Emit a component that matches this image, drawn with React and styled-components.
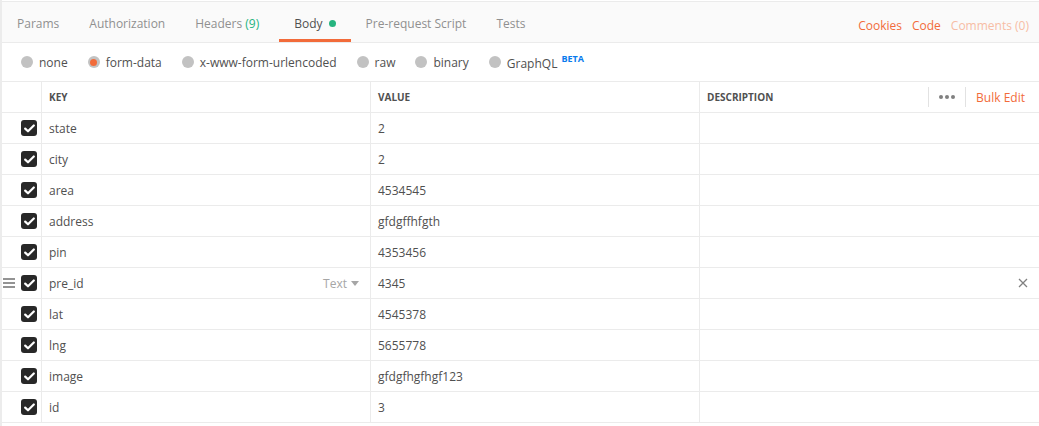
import React from "react";
import styled, { createGlobalStyle } from "styled-components";

const GlobalStyle = createGlobalStyle`
    html, body {
        margin: 0;
        padding: 0;
        background: #ffffff;
    }
    body {
        font-family: "Open Sans", "Liberation Sans", sans-serif;
        font-size: 12px;
        color: #505050;
    }
`;

const ORANGE = "#f26b3a";
const GREEN = "#26b47f";
const BORDER = "#ebebeb";

const Page = styled.div`
    width: 1039px;
    height: 426px;
    overflow: hidden;
    box-sizing: border-box;
    border-left: 2px solid #ececec;
    padding-top: 1px;
`;

const TabBar = styled.div`
    display: flex;
    align-items: stretch;
    height: 40px;
    background: #fafafa;
    border-top: 1px solid ${BORDER};
    border-bottom: 1px solid ${BORDER};
`;

const Tabs = styled.div`
    display: flex;
    flex: 1;
`;

const Tab = styled.div`
    display: flex;
    align-items: center;
    gap: 6px;
    padding: 6px ${(p) => (p.$wide ? "20px" : "15px")} 0 15px;
    box-sizing: border-box;
    font-size: 12px;
    color: ${(p) => (p.$active ? "#505050" : "#909090")};
    border-bottom: 3px solid ${(p) => (p.$active ? ORANGE : "transparent")};
`;

const Count = styled.span`
    color: ${GREEN};
`;

const Dot = styled.span`
    width: 7px;
    height: 7px;
    border-radius: 50%;
    background: ${GREEN};
`;

const Links = styled.div`
    display: flex;
    align-items: center;
    gap: 10px;
    padding: 6px 10px 0 0;
    font-size: 12px;
`;

const Link = styled.span`
    color: ${(p) => (p.$muted ? "#f7bda5" : ORANGE)};
`;

const RadioRow = styled.div`
    display: flex;
    align-items: center;
    height: 38px;
    padding-left: 19px;
    gap: 20px;
    border-bottom: 1px solid ${BORDER};
`;

const Radio = styled.label`
    display: flex;
    align-items: center;
    gap: 6px;
    font-size: 12px;
    color: #505050;
`;

const Circle = styled.span`
    width: 12px;
    height: 12px;
    border-radius: 50%;
    background: #c2c2c2;
    display: flex;
    align-items: center;
    justify-content: center;
    &::after {
        content: "";
        display: ${(p) => (p.$checked ? "block" : "none")};
        width: 7px;
        height: 7px;
        border-radius: 50%;
        background: ${ORANGE};
    }
`;

const Beta = styled.sup`
    font-size: 9px;
    font-weight: 700;
    color: #097bed;
    margin-left: 4px;
    position: relative;
    top: -1px;
`;

const Table = styled.div`
    display: grid;
    grid-template-columns: 40px 329px 329px 1fr;
`;

const Cell = styled.div`
    display: flex;
    align-items: center;
    box-sizing: border-box;
    padding: 0 7px;
    border-bottom: 1px solid ${BORDER};
    border-right: ${(p) => (p.$last ? "none" : `1px solid ${BORDER}`)};
    height: 31px;
    font-size: 12px;
    color: #505050;
`;

const HeadCell = styled(Cell)`
    font-size: 10px;
    font-weight: 700;
    color: #505050;
    text-transform: uppercase;
`;

const CheckCell = styled(Cell)`
    padding: 0 4px 0 0;
    justify-content: space-between;
`;

const Handle = styled.span`
    width: 14px;
    display: flex;
    justify-content: center;
`;

const Box = styled.span`
    width: 16px;
    height: 16px;
    border-radius: 3px;
    background: #282828;
    display: flex;
    align-items: center;
    justify-content: center;
`;

const KeyCell = styled(Cell)`
    justify-content: space-between;
`;

const TypeSelect = styled.span`
    display: flex;
    align-items: center;
    gap: 4px;
    color: #a6a6a6;
    padding-right: 4px;
`;

const DescCell = styled(Cell)`
    justify-content: space-between;
    padding-right: 10px;
`;

const HeadTools = styled.div`
    display: flex;
    align-items: center;
    height: 20px;
`;

const More = styled.span`
    height: 20px;
    display: flex;
    align-items: center;
    gap: 2px;
    padding: 0 10px;
    border-left: 1px solid #e2e2e2;
    border-right: 1px solid #e2e2e2;
`;

const MoreDot = styled.span`
    width: 4px;
    height: 4px;
    border-radius: 50%;
    background: #808080;
`;

const BulkEdit = styled.span`
    font-size: 12px;
    font-weight: 400;
    text-transform: none;
    color: ${ORANGE};
    padding: 0 4px 0 10px;
`;

const CloseIcon = styled.svg`
    width: 10px;
    height: 10px;
    margin-right: 1px;
`;

const rows = [
    ["state", "2"],
    ["city", "2"],
    ["area", "4534545"],
    ["address", "gfdgffhfgth"],
    ["pin", "4353456"],
    ["pre_id", "4345", true],
    ["lat", "4545378"],
    ["lng", "5655778"],
    ["image", "gfdgfhgfhgf123"],
    ["id", "3"],
];

function Check() {
    return (
        <Box>
            <svg width="11" height="9" viewBox="0 0 11 9">
                <path
                    d="M1.2 4.6 L4 7.3 L9.8 1.5"
                    fill="none"
                    stroke="#fff"
                    strokeWidth="2.2"
                    strokeLinecap="round"
                    strokeLinejoin="round"
                />
            </svg>
        </Box>
    );
}

function App() {
    return (
        <Page>
            <GlobalStyle />
            <TabBar>
                <Tabs>
                    <Tab>Params</Tab>
                    <Tab>Authorization</Tab>
                    <Tab $wide>
                        <span>
                            Headers <Count>(9)</Count>
                        </span>
                    </Tab>
                    <Tab $active>
                        Body <Dot />
                    </Tab>
                    <Tab>Pre-request Script</Tab>
                    <Tab>Tests</Tab>
                </Tabs>
                <Links>
                    <Link>Cookies</Link>
                    <Link>Code</Link>
                    <Link $muted>Comments (0)</Link>
                </Links>
            </TabBar>
            <RadioRow>
                <Radio>
                    <Circle /> none
                </Radio>
                <Radio>
                    <Circle $checked /> form-data
                </Radio>
                <Radio>
                    <Circle /> x-www-form-urlencoded
                </Radio>
                <Radio>
                    <Circle /> raw
                </Radio>
                <Radio>
                    <Circle /> binary
                </Radio>
                <Radio>
                    <Circle />
                    <span>
                        GraphQL<Beta>BETA</Beta>
                    </span>
                </Radio>
            </RadioRow>
            <Table>
                <HeadCell />
                <HeadCell>Key</HeadCell>
                <HeadCell>Value</HeadCell>
                <HeadCell as={DescCell} $last>
                    <span>Description</span>
                    <HeadTools>
                        <More>
                            <MoreDot />
                            <MoreDot />
                            <MoreDot />
                        </More>
                        <BulkEdit>Bulk Edit</BulkEdit>
                    </HeadTools>
                </HeadCell>
                {rows.map(([key, value, hover]) => (
                    <React.Fragment key={key}>
                        <CheckCell>
                            <Handle>
                                {hover && (
                                    <svg width="12" height="10" viewBox="0 0 12 10">
                                        <path
                                            d="M0 1h12M0 5h12M0 9h12"
                                            stroke="#707070"
                                            strokeWidth="1.4"
                                        />
                                    </svg>
                                )}
                            </Handle>
                            <Check />
                        </CheckCell>
                        <KeyCell>
                            <span>{key}</span>
                            {hover && (
                                <TypeSelect>
                                    Text
                                    <svg width="8" height="5" viewBox="0 0 8 5">
                                        <path d="M0 0h8L4 5z" fill="#a6a6a6" />
                                    </svg>
                                </TypeSelect>
                            )}
                        </KeyCell>
                        <Cell>{value}</Cell>
                        <DescCell $last>
                            <span />
                            {hover && (
                                <CloseIcon viewBox="0 0 10 10">
                                    <path
                                        d="M1 1l8 8M9 1l-8 8"
                                        stroke="#808080"
                                        strokeWidth="1.3"
                                    />
                                </CloseIcon>
                            )}
                        </DescCell>
                    </React.Fragment>
                ))}
            </Table>
        </Page>
    );
}

export default App;
